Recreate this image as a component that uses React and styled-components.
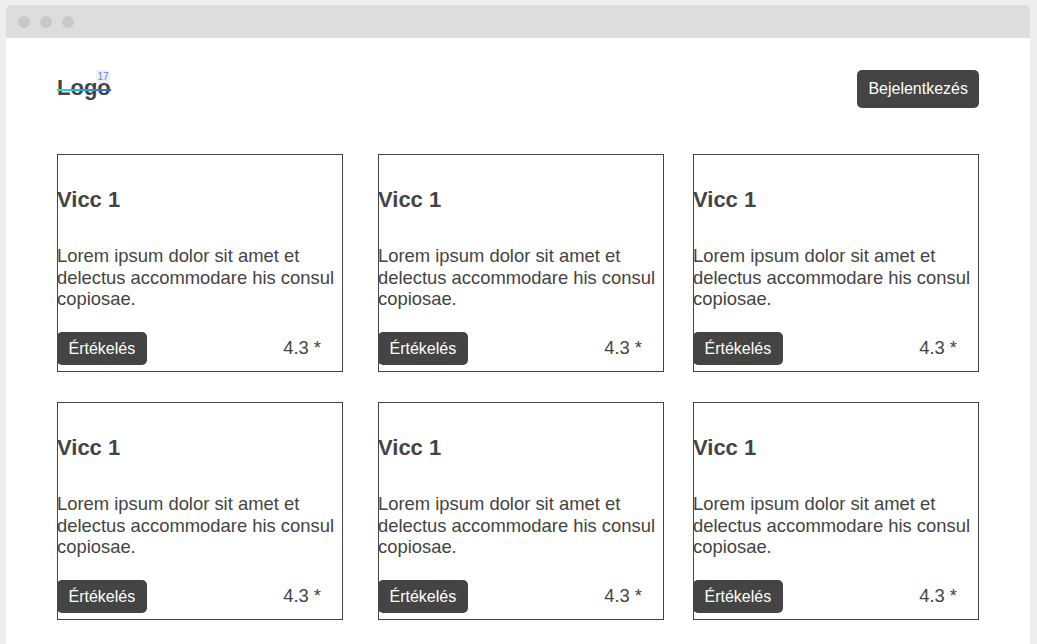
import React from "react";
import styled, { createGlobalStyle } from "styled-components";

const Global = createGlobalStyle`
  html, body { margin: 0; padding: 0; background: #eeeeee; }
  body { font-family: "Liberation Sans", Arial, sans-serif; color: #444; }
  * { box-sizing: border-box; }
`;

const Window = styled.div`
  margin: 5px 7px 0 6px;
  min-height: calc(100vh - 5px);
  background: #fff;
  border-radius: 5px 5px 0 0;
  overflow: hidden;
  display: flex;
  flex-direction: column;
`;

const TitleBar = styled.div`
  height: 33px;
  background: #dddddd;
  display: flex;
  align-items: center;
  gap: 10px;
  padding-left: 12px;
  flex-shrink: 0;
`;

const Dot = styled.span`
  width: 12px;
  height: 12px;
  border-radius: 50%;
  background: #c8c8c8;
`;

const Content = styled.main`
  padding: 32px 51px 0 51px;
`;

const Header = styled.header`
  display: flex;
  justify-content: space-between;
  align-items: center;
  height: 38px;
  margin-bottom: 46px;
`;

const Logo = styled.div`
  position: relative;
  font-size: 22px;
  font-weight: 700;
  line-height: 25px;
  color: #444;
  margin-top: -3px;
`;

const Strike = styled.span`
  position: absolute;
  left: 0;
  right: 0;
  top: 14px;
  height: 2px;
  background: linear-gradient(90deg, #19e6e6, #2e63e0);
`;

const Badge = styled.span`
  position: absolute;
  left: 39px;
  top: -5px;
  width: 14px;
  height: 13px;
  background: #eef0f6;
  color: #5b82ee;
  font-size: 10px;
  font-weight: 400;
  line-height: 13px;
  text-align: center;
  border-radius: 2px;
`;

const Button = styled.button`
  font-family: "Liberation Sans", Arial, sans-serif;
  font-size: 16px;
  color: #fff;
  background: #444;
  border: none;
  border-radius: 5px;
  padding: 0 ${(p) => (p.$large ? "11px" : "11.5px")};
  height: ${(p) => (p.$large ? "38px" : "33px")};
  cursor: pointer;
`;

const Grid = styled.section`
  display: grid;
  grid-template-columns: 321px 315px 286px;
  row-gap: 30px;
`;

const Card = styled.article`
  width: 286px;
  height: 218px;
  border: 1px solid #444;
  padding: 0 0 6px 0;
  display: flex;
  flex-direction: column;
`;

const CardTitle = styled.h2`
  margin: 32px 0 0 -1px;
  font-size: 22px;
  line-height: 25px;
  font-weight: 700;
  color: #444;
`;

const CardText = styled.p`
  margin: 33px -4px 0 -1px;
  font-size: 18.4px;
  line-height: 21.5px;
  color: #444;
`;

const CardFooter = styled.div`
  margin: auto 0 0 -1px;
  padding-right: 21px;
  display: flex;
  justify-content: space-between;
  align-items: center;
`;

const Rating = styled.span`
  font-size: 18.4px;
  color: #444;
  margin-bottom: 2px;
`;

const cards = Array.from({ length: 6 }, (_, i) => ({
  id: i,
  title: "Vicc 1",
  text: "Lorem ipsum dolor sit amet et delectus accommodare his consul copiosae.",
  rating: "4.3 *",
}));

export default function App() {
  return (
    <>
      <Global />
      <Window>
        <TitleBar>
          <Dot />
          <Dot />
          <Dot />
        </TitleBar>
        <Content>
          <Header>
            <Logo>
              Logo
              <Strike />
              <Badge>17</Badge>
            </Logo>
            <Button $large>Bejelentkezés</Button>
          </Header>
          <Grid>
            {cards.map((c) => (
              <Card key={c.id}>
                <CardTitle>{c.title}</CardTitle>
                <CardText>{c.text}</CardText>
                <CardFooter>
                  <Button>Értékelés</Button>
                  <Rating>{c.rating}</Rating>
                </CardFooter>
              </Card>
            ))}
          </Grid>
        </Content>
      </Window>
    </>
  );
}
